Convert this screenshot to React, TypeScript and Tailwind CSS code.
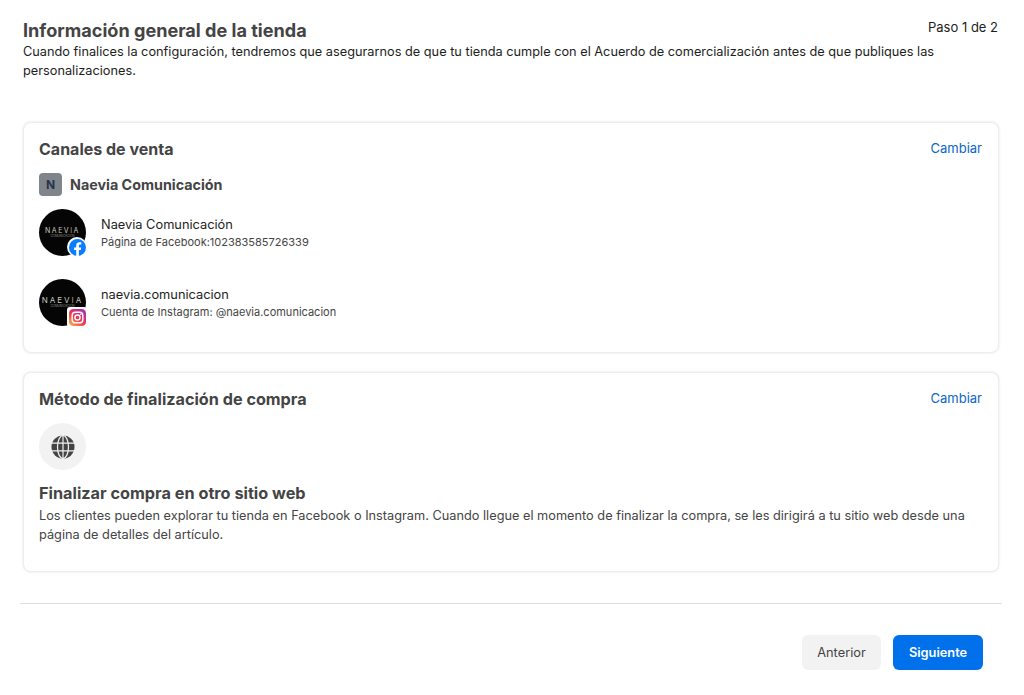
function Globe() {
  return (
    <svg width="24" height="24" viewBox="0 0 24 24">
      <circle cx="12" cy="12" r="11.5" fill="#444444" />
      <g stroke="#f2f2f2" strokeWidth="1.2" fill="none">
        <ellipse cx="12" cy="12" rx="5.5" ry="11.5" />
        <path d="M12 .5v23M1 8.2h22M1 15.8h22" />
      </g>
    </svg>
  );
}

function FacebookBadge() {
  return (
    <span className="absolute right-[-1px] bottom-[-1px] flex h-[20px] w-[20px] items-center justify-center rounded-full bg-white">
      <svg width="17" height="17" viewBox="0 0 24 24">
        <circle cx="12" cy="12" r="12" fill="#0a7cff" />
        <path
          fill="#ffffff"
          d="M16.7 15.5l.5-3.5h-3.3V9.8c0-1 .5-1.9 2-1.9h1.5v-3s-1.4-.2-2.7-.2c-2.7 0-4.5 1.6-4.5 4.6V12h-3v3.5h3V24h3.7v-8.5z"
        />
      </svg>
    </span>
  );
}

function InstagramBadge() {
  return (
    <span className="absolute right-[-1px] bottom-[-1px] flex h-[20px] w-[20px] items-center justify-center rounded-[3px] bg-white">
      <svg width="17" height="17" viewBox="0 0 24 24">
        <defs>
          <linearGradient id="ig" x1="0.1" y1="1" x2="0.9" y2="0">
            <stop offset="0" stopColor="#fdb045" />
            <stop offset="0.45" stopColor="#f0364f" />
            <stop offset="1" stopColor="#a62fc0" />
          </linearGradient>
        </defs>
        <rect width="24" height="24" rx="6" fill="url(#ig)" />
        <rect x="4.5" y="4.5" width="15" height="15" rx="4.5" fill="none" stroke="#fff" strokeWidth="2" />
        <circle cx="12" cy="12" r="3.6" fill="none" stroke="#fff" strokeWidth="2" />
        <circle cx="16.6" cy="7.4" r="1.1" fill="#fff" />
      </svg>
    </span>
  );
}

function Avatar({ children, wide }: { children: React.ReactNode; wide?: boolean }) {
  return (
    <div className="relative flex h-[47px] w-[47px] shrink-0 items-center justify-center rounded-full bg-[#050505]">
      <div className="mb-[1px] flex flex-col items-center">
        <span className={wide ? "text-[8px] leading-[9px] tracking-[2px] text-[#c9c6bf]" : "text-[7px] leading-[8px] tracking-[1.5px] text-[#c9c6bf]"}>
          NAEV<span className="text-[#c2a25f]">I</span>A
        </span>
        <span className="text-[3px] leading-[3px] text-[#8f8d88]">COMUNICACIÓN</span>
      </div>
      {children}
    </div>
  );
}

function Channel({ name, sub, wide, children }: { name: string; sub: string; wide?: boolean; children: React.ReactNode }) {
  return (
    <div className="flex items-center gap-[15px]">
      <Avatar wide={wide}>{children}</Avatar>
      <div>
        <div className="text-[12.8px] leading-[18px] text-[#1c1e21]">{name}</div>
        <div className="mt-[1px] text-[11px] leading-[15px] text-[#444444]">{sub}</div>
      </div>
    </div>
  );
}

export default function App() {
  return (
    <div className="h-[695px] w-[1024px] overflow-hidden bg-white font-['Inter',sans-serif]">
      <div className="px-[23px] pt-[18px]">
        <div className="flex items-start justify-between pr-[3px]">
          <h1 className="text-[18.1px] leading-[24px] font-bold text-[#444444]">Información general de la tienda</h1>
          <span className="text-[13px] leading-[18px] text-[#1c1e21]">Paso 1 de 2</span>
        </div>
        <p className="w-[940px] text-[12.75px] leading-[19px] text-[#1c1e21]">
          Cuando finalices la configuración, tendremos que asegurarnos de que tu tienda cumple con el Acuerdo de
          comercialización antes de que publiques las personalizaciones.
        </p>
      </div>

      <div className="mt-[42px] flex flex-col gap-[19px] px-[23px]">
        <section className="h-[231px] w-[976px] rounded-[8px] border border-[#ededed] bg-white px-[15px] pt-[15px] shadow-[0_0_3px_rgba(0,0,0,0.1)]">
          <div className="flex items-start justify-between pr-[1px]">
            <h2 className="text-[16px] leading-[22px] font-bold text-[#444444]">Canales de venta</h2>
            <a className="pt-[1px] text-[13px] leading-[18px] text-[#0a66c8]">Cambiar</a>
          </div>
          <div className="mt-[13px] flex items-center gap-[8px]">
            <span className="flex h-[23px] w-[23px] items-center justify-center rounded-[4px] bg-[#80848b] text-[12px] font-bold text-[#283548]">
              N
            </span>
            <span className="text-[14.3px] leading-[18px] font-bold text-[#444444]">Naevia Comunicación</span>
          </div>
          <div className="mt-[13px] flex flex-col gap-[23px]">
            <Channel name="Naevia Comunicación" sub="Página de Facebook:102383585726339">
              <FacebookBadge />
            </Channel>
            <Channel name="naevia.comunicacion" sub="Cuenta de Instagram: @naevia.comunicacion" wide>
              <InstagramBadge />
            </Channel>
          </div>
        </section>

        <section className="h-[200px] w-[976px] rounded-[8px] border border-[#ededed] bg-white px-[15px] pt-[15px] shadow-[0_0_3px_rgba(0,0,0,0.1)]">
          <div className="flex items-start justify-between pr-[1px]">
            <h2 className="text-[16.2px] leading-[22px] font-bold text-[#444444]">Método de finalización de compra</h2>
            <a className="pt-[1px] text-[13px] leading-[18px] text-[#0a66c8]">Cambiar</a>
          </div>
          <div className="mt-[13px] flex h-[47px] w-[47px] items-center justify-center rounded-full bg-[#f2f2f2]">
            <Globe />
          </div>
          <h3 className="mt-[13px] text-[16.25px] leading-[20px] font-bold text-[#444444]">
            Finalizar compra en otro sitio web
          </h3>
          <p className="mt-[3px] w-[945px] text-[12.75px] leading-[19px] text-[#444444]">
            Los clientes pueden explorar tu tienda en Facebook o Instagram. Cuando llegue el momento de finalizar la
            compra, se les dirigirá a tu sitio web desde una página de detalles del artículo.
          </p>
        </section>
      </div>

      <div className="mx-[20px] mt-[31px] h-px w-[982px] bg-[#dedede]" />

      <div className="mt-[31px] flex justify-end gap-[12px] pr-[41px]">
        <button className="h-[35px] w-[79px] rounded-[6px] bg-[#f2f2f2] text-[12.8px] text-[#444444]">Anterior</button>
        <button className="h-[35px] w-[90px] rounded-[6px] bg-[#0071eb] text-[12.8px] font-semibold text-white">Siguiente</button>
      </div>
    </div>
  );
}
